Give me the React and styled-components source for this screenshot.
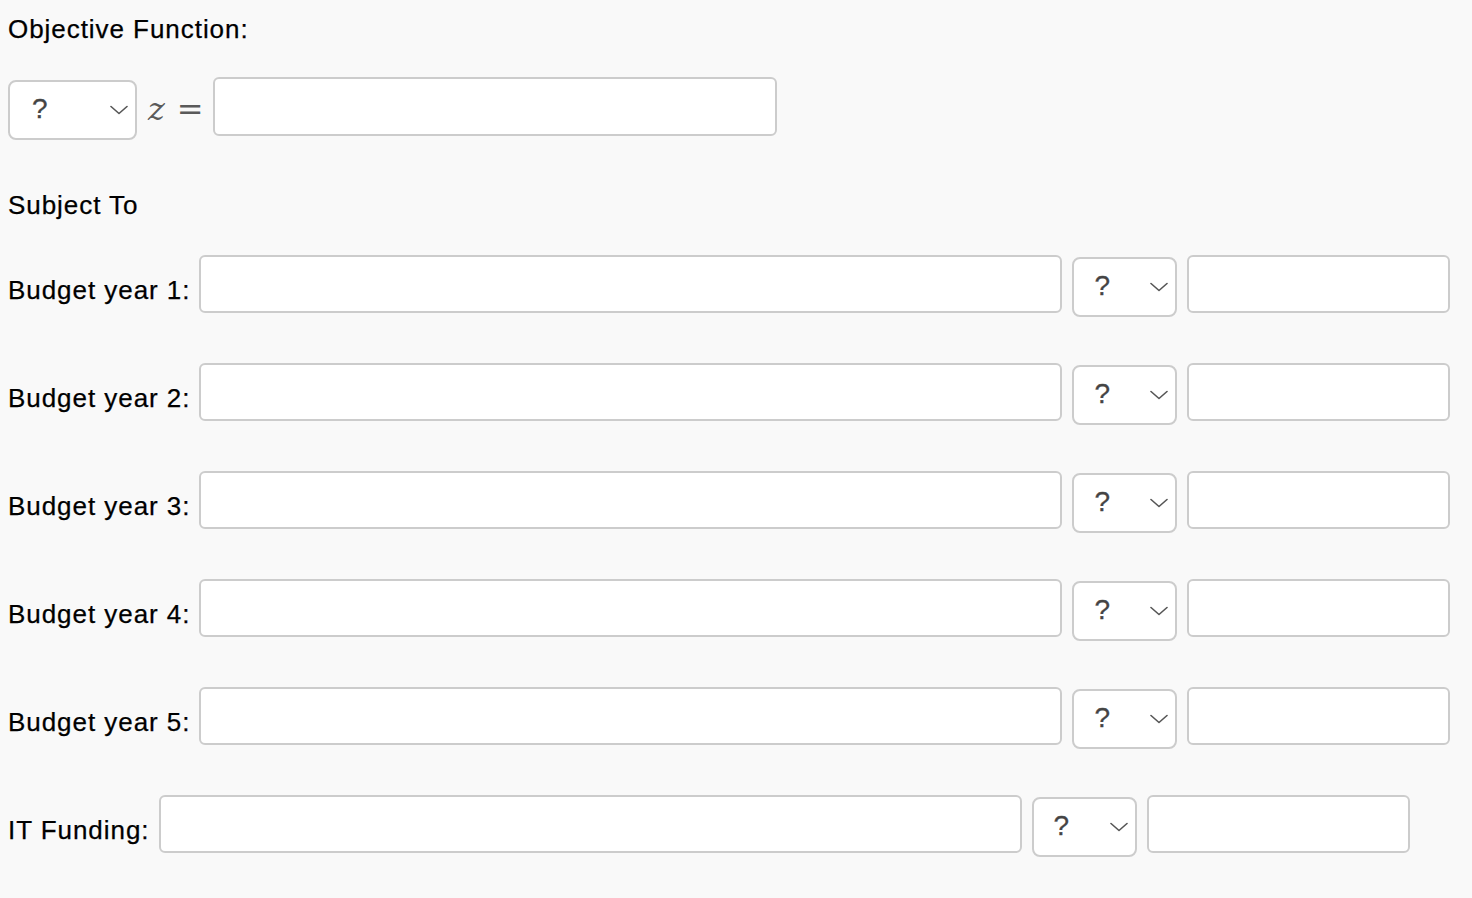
import React from "react";
import styled, { createGlobalStyle } from "styled-components";

const Global = createGlobalStyle`
  html, body { margin: 0; padding: 0; background: #f9f9f9; }
  body {
    font-family: "Liberation Sans", Arial, Helvetica, sans-serif;
    color: #000;
  }
`;

const Page = styled.div`
  padding: 14px 8px 0 8px;
  display: flex;
  flex-direction: column;
  min-height: 884px;
  box-sizing: border-box;
`;

const Heading = styled.div`
  font-size: 26px;
  letter-spacing: 0.95px;
  line-height: 30px;
  -webkit-text-stroke: 0.25px #000;
  margin-top: ${(p) => p.$mt || 0}px;
`;

const ObjectiveRow = styled.div`
  display: flex;
  align-items: flex-start;
  margin-top: 33px;
`;

const Rows = styled.div`
  display: flex;
  flex-direction: column;
  gap: 46px;
  margin-top: 35px;
`;

const Row = styled.div`
  display: flex;
  align-items: flex-start;
`;

const Label = styled.label`
  font-size: 26px;
  letter-spacing: 0.95px;
  line-height: 30px;
  -webkit-text-stroke: 0.25px #000;
  margin-top: 20px;
  margin-right: 9px;
  white-space: nowrap;
`;

const TextBox = styled.div`
  box-sizing: border-box;
  width: ${(p) => p.$w}px;
  height: ${(p) => p.$h || 58}px;
  background: #fff;
  border: 2px solid #cccccc;
  border-radius: 6px;
  flex: none;
`;

const SelectBox = styled.div`
  box-sizing: border-box;
  width: ${(p) => p.$w}px;
  height: ${(p) => p.$h || 60}px;
  margin-top: ${(p) => p.$mt || 0}px;
  margin-left: ${(p) => p.$ml || 0}px;
  margin-right: ${(p) => p.$mr || 0}px;
  background: #fff;
  border: 2px solid #cccccc;
  border-radius: 8px;
  display: flex;
  align-items: center;
  justify-content: space-between;
  padding: 0 7px 0 ${(p) => p.$pl || 20}px;
  flex: none;
`;

const Q = styled.span`
  font-size: 28px;
  color: #444;
  line-height: 1;
  margin-top: -2px;
  -webkit-text-stroke: 0.3px #444;
`;

const MathEq = styled.span`
  display: flex;
  align-items: center;
  gap: 12px;
  height: 59px;
  margin-top: 2px;
  margin-left: 1px;
  margin-right: 9px;
  color: #5a5a5a;
  font-family: "DejaVu Serif", "Liberation Serif", serif;
  font-size: 32px;
  line-height: 1;
  & i { font-style: italic; }
`;

const Chevron = () => (
  <svg width="18" height="10" viewBox="0 0 18 10" fill="none">
    <path d="M1 1.5 L9 8.5 L17 1.5" stroke="#555" strokeWidth="1.6" strokeLinecap="round" strokeLinejoin="round" />
  </svg>
);

const Select = ({ w, mt, ml, mr, pl }) => (
  <SelectBox $w={w} $mt={mt} $ml={ml} $mr={mr} $pl={pl}>
    <Q>?</Q>
    <Chevron />
  </SelectBox>
);

const constraints = [
  "Budget year 1:",
  "Budget year 2:",
  "Budget year 3:",
  "Budget year 4:",
  "Budget year 5:",
  "IT Funding:",
];

export default function App() {
  return (
    <>
      <Global />
      <Page>
        <Heading>Objective Function:</Heading>
        <ObjectiveRow>
          <Select w={129} mt={3} mr={10} pl={22} />
          <MathEq>
            <i>z</i>
            <span>=</span>
          </MathEq>
          <TextBox $w={564} $h={59} />
        </ObjectiveRow>
        <Heading $mt={50}>Subject To</Heading>
        <Rows>
          {constraints.map((c) => (
            <Row key={c}>
              <Label>{c}</Label>
              <TextBox $w={863} />
              <Select w={105} mt={2} ml={10} mr={10} pl={20} />
              <TextBox $w={263} />
            </Row>
          ))}
        </Rows>
      </Page>
    </>
  );
}
